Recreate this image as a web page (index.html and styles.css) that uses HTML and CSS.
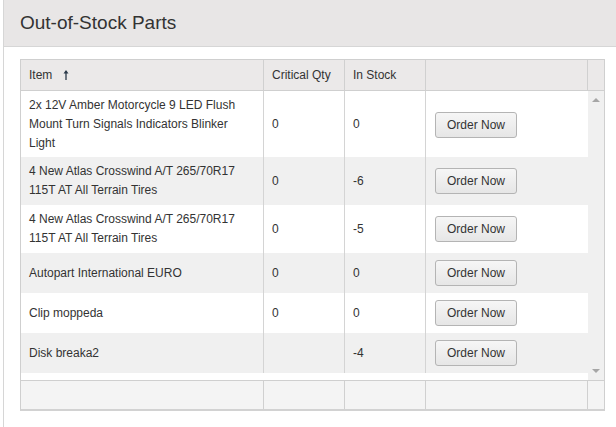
FILE: index.html
```html
<!DOCTYPE html>
<html lang="en">
<head>
    <meta charset="UTF-8">
    <title>Out-of-Stock Parts</title>
    <link rel="stylesheet" href="styles.css">
</head>
<body>
<div class="panel">
    <div class="panel-heading">
        <h3>Out-of-Stock Parts</h3>
    </div>
    <div class="panel-body">
        <div class="grid">
            <!-- column headers -->
            <table class="grid-table grid-header">
                <colgroup>
                    <col class="col-item"><col class="col-qty"><col class="col-qty"><col class="col-action"><col class="col-scroll">
                </colgroup>
                <tr>
                    <th>Item
                        <svg class="sort-icon" width="8" height="11" viewBox="0 0 8 11">
                            <path d="M4 2 L4 11" stroke="#2b3a4a" stroke-width="1.3"/>
                            <path d="M1.5 4.5 L4 1 L6.5 4.5 Z" fill="#2b3a4a"/>
                        </svg>
                    </th>
                    <th>Critical Qty</th>
                    <th>In Stock</th>
                    <th></th>
                    <th></th>
                </tr>
            </table>

            <!-- rows -->
            <div class="grid-content">
                <table class="grid-table grid-rows">
                    <colgroup>
                        <col class="col-item"><col class="col-qty"><col class="col-qty"><col class="col-action">
                    </colgroup>
                    <tr class="first">
                        <td>2x 12V Amber Motorcycle 9 LED Flush Mount Turn Signals Indicators Blinker Light</td>
                        <td>0</td>
                        <td>0</td>
                        <td><button type="button">Order Now</button></td>
                    </tr>
                    <tr class="alt">
                        <td>4 New Atlas Crosswind A/T 265/70R17 115T AT All Terrain Tires</td>
                        <td>0</td>
                        <td>-6</td>
                        <td><button type="button">Order Now</button></td>
                    </tr>
                    <tr>
                        <td>4 New Atlas Crosswind A/T 265/70R17 115T AT All Terrain Tires</td>
                        <td>0</td>
                        <td>-5</td>
                        <td><button type="button">Order Now</button></td>
                    </tr>
                    <tr class="alt">
                        <td>Autopart International EURO</td>
                        <td>0</td>
                        <td>0</td>
                        <td><button type="button">Order Now</button></td>
                    </tr>
                    <tr>
                        <td>Clip moppeda</td>
                        <td>0</td>
                        <td>0</td>
                        <td><button type="button">Order Now</button></td>
                    </tr>
                    <tr class="alt">
                        <td>Disk breaka2</td>
                        <td></td>
                        <td>-4</td>
                        <td><button type="button">Order Now</button></td>
                    </tr>
                </table>
                <div class="scrollbar">
                    <span class="arrow-up"></span>
                    <span class="arrow-down"></span>
                </div>
            </div>

            <!-- footer -->
            <table class="grid-table grid-footer">
                <colgroup>
                    <col class="col-item"><col class="col-qty"><col class="col-qty"><col class="col-action"><col class="col-scroll">
                </colgroup>
                <tr>
                    <td></td><td></td><td></td><td></td><td></td>
                </tr>
            </table>
        </div>
    </div>
</div>
</body>
</html>
```

FILE: styles.css
```css
html, body {
    margin: 0;
    padding: 0;
    background-color: #fff;
    overflow: hidden;
}

body {
    font-family: "Liberation Sans", Arial, sans-serif;
    font-size: 12px;
    color: #333;
}

.panel {
    width: 640px;
    height: 440px;
    margin-left: 3px;
    border-left: 1px solid #d6d6d6;
}

.panel-heading {
    background-color: #e8e6e6;
    border-bottom: 1px solid #d6d6d6;
    height: 46px;
    padding-left: 16px;
}

.panel-heading h3 {
    margin: 0;
    padding-top: 12px;
    font-size: 19px;
    font-weight: normal;
    line-height: 21px;
    color: #333;
}

.panel-body {
    padding: 12px 0 0 16px;
}

.grid {
    width: 583px;
    border: 1px solid #cfcfcf;
    border-bottom: 2px solid #d2d2d2;
}

.grid-table {
    table-layout: fixed;
    border-collapse: separate;
    border-spacing: 0;
}

.col-item { width: 243px; }
.col-qty { width: 81px; }
.col-action { width: 162px; }
.col-scroll { width: 16px; }

.grid-header {
    width: 583px;
    background-color: #ebe9e9;
}

.grid-header th {
    height: 30px;
    padding: 0 8px;
    font-weight: normal;
    text-align: left;
    border-right: 1px solid #d0d0d0;
    border-bottom: 1px solid #cfcfcf;
}

.grid-header th:last-child {
    border-right: none;
}

.sort-icon {
    margin-left: 6px;
    vertical-align: -1px;
}

.grid-content {
    display: flex;
    height: 289px;
    overflow: hidden;
}

.grid-rows {
    width: 567px;
    align-self: flex-start;
}

.grid-rows td {
    padding: 5px 8px;
    line-height: 19px;
    vertical-align: middle;
    border-right: 1px solid #d4d4d4;
}

.grid-rows tr.first td {
    padding-bottom: 4px;
}

.grid-rows td:last-child {
    border-right: none;
}

.grid-rows tr.alt td {
    background-color: #f0f0f0;
}

button {
    width: 82px;
    height: 26px;
    margin: 2px 0 2px 1px;
    padding: 0;
    font-family: "Liberation Sans", Arial, sans-serif;
    font-size: 12px;
    color: #333;
    background: linear-gradient(#f6f6f6, #e6e6e6);
    border: 1px solid #b4b4b4;
    border-radius: 3px;
    vertical-align: middle;
    cursor: pointer;
}

.scrollbar {
    position: relative;
    width: 16px;
    flex: none;
    background-color: #f0f0f0;
}

.arrow-up,
.arrow-down {
    position: absolute;
    left: 4px;
    width: 0;
    height: 0;
    border-left: 4px solid transparent;
    border-right: 4px solid transparent;
}

.arrow-up {
    top: 7px;
    border-bottom: 4px solid #a6a6a6;
}

.arrow-down {
    bottom: 7px;
    border-top: 4px solid #a6a6a6;
}

.grid-footer {
    width: 583px;
    background-color: #f4f4f4;
}

.grid-footer td {
    height: 28px;
    padding: 0;
    border-top: 1px solid #cfcfcf;
    border-right: 1px solid #d0d0d0;
}

.grid-footer td:last-child {
    border-right: none;
}
```
